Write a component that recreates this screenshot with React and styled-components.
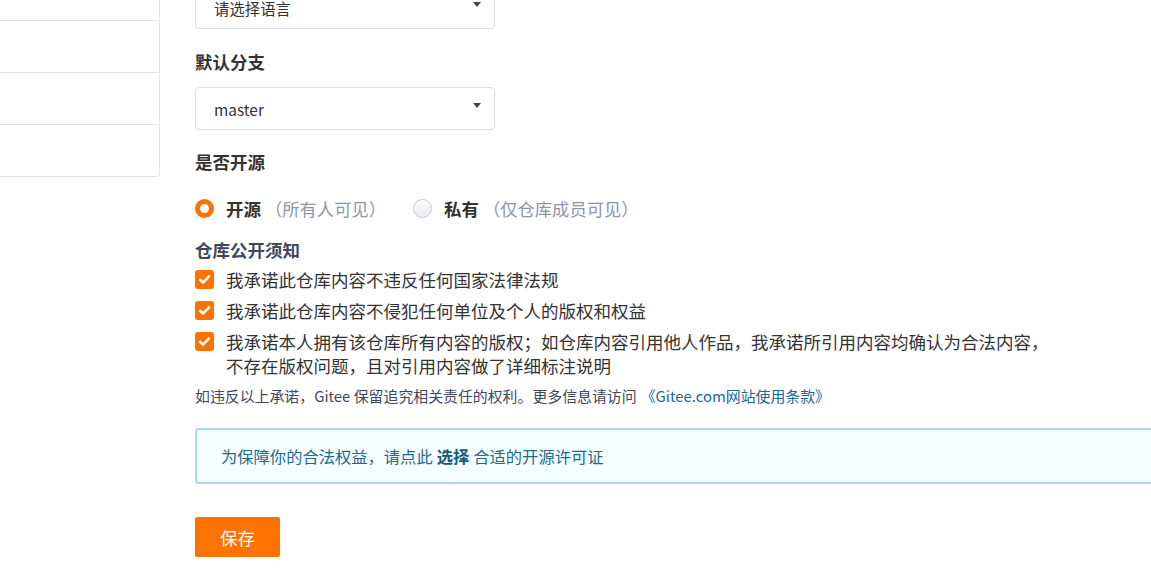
import React from "react";
import styled, { createGlobalStyle } from "styled-components";

const Global = createGlobalStyle`
  html, body { margin: 0; padding: 0; background: #fff; overflow: hidden; }
  body { font-family: "Microsoft YaHei", "Noto Sans CJK SC", "Noto Sans", sans-serif; color: #333; }
  * { box-sizing: border-box; }
`;

const Page = styled.div`
  display: flex;
  align-items: flex-start;
  width: 1151px;
  height: 585px;
  overflow: hidden;
`;

const Sidebar = styled.div`
  width: 160px;
  flex: none;
  margin-top: -33px;
  border: 1px solid #e3e3e3;
  border-left: none;
  border-radius: 0 0 4px 0;
  background: #fff;
`;

const SideRow = styled.div`
  height: 52px;
  border-top: ${(p) => (p.$first ? "none" : "1px solid #e3e3e3")};
`;

const Main = styled.div`
  margin-left: 35px;
  margin-top: -14px;
  width: 1000px;
  flex: none;
  display: flex;
  flex-direction: column;
  align-items: flex-start;
`;

const Select = styled.div`
  width: 300px;
  height: 43px;
  border: 1px solid #dedede;
  border-radius: 4px;
  display: flex;
  align-items: center;
  justify-content: space-between;
  padding: 0 13px 0 18px;
  font-size: 15.4px;
  color: #333;
  margin-top: ${(p) => p.$mt || 0}px;
`;

const Caret = styled.span`
  width: 0;
  height: 0;
  border-left: 4.5px solid transparent;
  border-right: 4.5px solid transparent;
  border-top: 5px solid #444;
  margin-top: -6px;
`;

const Label = styled.div`
  font-size: 17.5px;
  line-height: 24px;
  font-weight: 700;
  color: ${(p) => p.$color || "#333"};
  margin-top: ${(p) => p.$mt || 0}px;
`;

const RadioRow = styled.div`
  display: flex;
  align-items: center;
  height: 24px;
  margin-top: 22px;
`;

const RadioItem = styled.label`
  display: flex;
  align-items: center;
  margin-right: 27px;
`;

const RadioDot = styled.span`
  width: 19px;
  height: 19px;
  border-radius: 50%;
  flex: none;
  ${(p) =>
    p.$checked
      ? "border: 5px solid #fe7300; background: #fff;"
      : "border: 1px solid #c8c8cc; background: linear-gradient(#fdfdfd, #e8e8ec);"}
`;

const RadioText = styled.span`
  font-size: 17.5px;
  font-weight: 700;
  color: #333;
  margin-left: 12px;
`;

const RadioHint = styled.span`
  font-size: 17.3px;
  color: #8f95a5;
  margin-left: 4px;
`;

const CheckList = styled.div`
  display: flex;
  flex-direction: column;
  gap: 7px;
  margin-top: 6px;
`;

const CheckRow = styled.div`
  display: flex;
  align-items: flex-start;
`;

const Box = styled.span`
  width: 19px;
  height: 19px;
  flex: none;
  border-radius: 3px;
  background: #fe7300;
  display: flex;
  align-items: center;
  justify-content: center;
  margin-top: 2px;
`;

const CheckText = styled.span`
  margin-left: 12px;
  font-size: 17.5px;
  line-height: 24px;
  color: #333;
  width: 840px;
`;

const Notice = styled.div`
  margin-top: 8px;
  font-size: 14.9px;
  line-height: 20px;
  color: #40485b;
`;

const Link = styled.a`
  color: #1b6992;
  text-decoration: none;
  margin-left: 4px;
`;

const InfoBox = styled.div`
  margin-top: 22px;
  width: 980px;
  height: 56px;
  border: 2px solid #a9d8e4;
  border-radius: 4px;
  background: #f5feff;
  display: flex;
  align-items: center;
  padding-left: 24px;
  font-size: 16.3px;
  color: #1e6a8d;
`;

const Strong = styled.b`
  color: #155b7d;
  margin: 0 4px;
`;

const SaveButton = styled.button`
  margin-top: 33px;
  width: 85px;
  height: 40px;
  border: none;
  border-radius: 2px;
  background: #fe7300;
  color: #fff;
  font-family: inherit;
  font-size: 17.5px;
  padding: 0;
`;

const Check = () => (
  <svg width="13" height="11" viewBox="0 0 13 11">
    <path d="M2 5.8 L5 8.6 L11 2.4" fill="none" stroke="#fff" strokeWidth="2.6" strokeLinecap="round" strokeLinejoin="round" />
  </svg>
);

export default function App() {
  return (
    <>
      <Global />
      <Page>
        <Sidebar>
          <SideRow $first />
          <SideRow />
          <SideRow />
          <SideRow />
        </Sidebar>
        <Main>
          <Select>
            <span>请选择语言</span>
            <Caret />
          </Select>
          <Label $mt={21}>默认分支</Label>
          <Select $mt={13}>
            <span>master</span>
            <Caret />
          </Select>
          <Label $mt={20}>是否开源</Label>
          <RadioRow>
            <RadioItem>
              <RadioDot $checked />
              <RadioText>开源</RadioText>
              <RadioHint>（所有人可见）</RadioHint>
            </RadioItem>
            <RadioItem>
              <RadioDot />
              <RadioText>私有</RadioText>
              <RadioHint>（仅仓库成员可见）</RadioHint>
            </RadioItem>
          </RadioRow>
          <Label $mt={18} $color="#40485b">仓库公开须知</Label>
          <CheckList>
            <CheckRow>
              <Box><Check /></Box>
              <CheckText>我承诺此仓库内容不违反任何国家法律法规</CheckText>
            </CheckRow>
            <CheckRow>
              <Box><Check /></Box>
              <CheckText>我承诺此仓库内容不侵犯任何单位及个人的版权和权益</CheckText>
            </CheckRow>
            <CheckRow>
              <Box><Check /></Box>
              <CheckText>
                我承诺本人拥有该仓库所有内容的版权；如仓库内容引用他人作品，我承诺所引用内容均确认为合法内容，
                <br />
                不存在版权问题，且对引用内容做了详细标注说明
              </CheckText>
            </CheckRow>
          </CheckList>
          <Notice>
            如违反以上承诺，Gitee 保留追究相关责任的权利。更多信息请访问
            <Link href="#">《Gitee.com网站使用条款》</Link>
          </Notice>
          <InfoBox>
            为保障你的合法权益，请点此<Strong>选择</Strong>合适的开源许可证
          </InfoBox>
          <SaveButton>保存</SaveButton>
        </Main>
      </Page>
    </>
  );
}
